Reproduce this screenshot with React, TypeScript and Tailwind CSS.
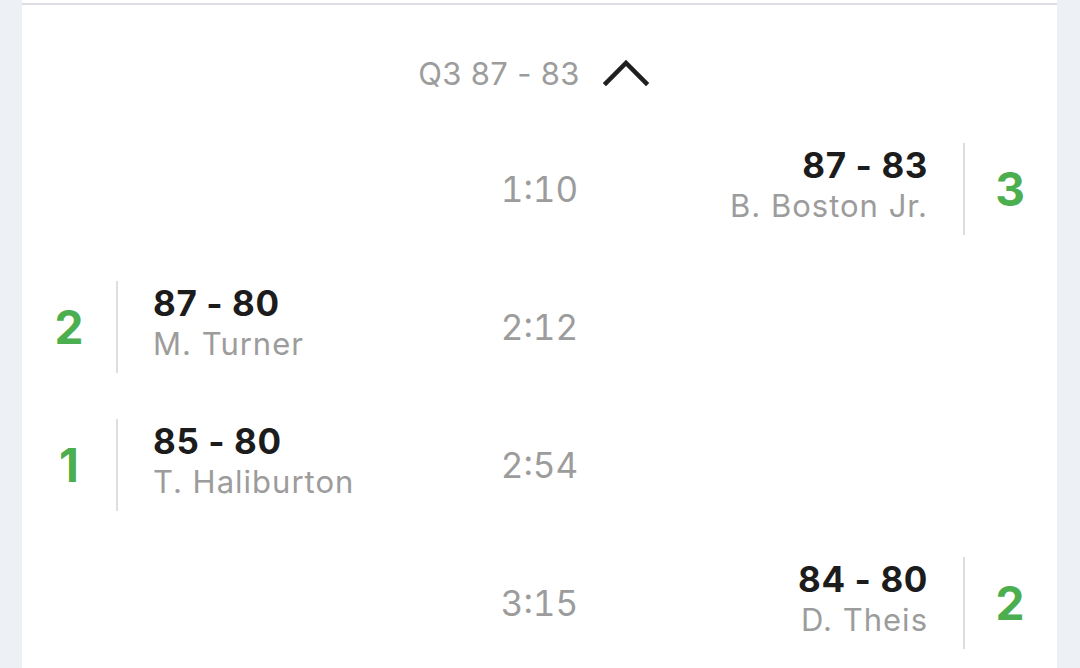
type Play = {
  time: string;
  side: 'home' | 'away';
  score: string;
  player: string;
  points: number;
};

const plays: Play[] = [
  { time: '1:10', side: 'away', score: '87 - 83', player: 'B. Boston Jr.', points: 3 },
  { time: '2:12', side: 'home', score: '87 - 80', player: 'M. Turner', points: 2 },
  { time: '2:54', side: 'home', score: '85 - 80', player: 'T. Haliburton', points: 1 },
  { time: '3:15', side: 'away', score: '84 - 80', player: 'D. Theis', points: 2 },
];

function ChevronUp() {
  return (
    <svg width="46" height="28" viewBox="0 0 46 28" fill="none" className="shrink-0">
      <polyline points="3,24 23,4 43,24" stroke="#1f1f1f" strokeWidth="4.5" strokeLinecap="square" />
    </svg>
  );
}

function Points({ value }: { value: number }) {
  return (
    <div className="w-[50px] text-center text-[46px] font-bold leading-none text-[#4bae4f]">{value}</div>
  );
}

function Divider() {
  return <div className="h-[92px] w-[2px] bg-[#dedede]" />;
}

function PlayText({ score, player, align }: { score: string; player: string; align: 'left' | 'right' }) {
  return (
    <div className={align === 'right' ? 'pb-[6px] text-right' : 'pb-[6px] text-left'}>
      <div className="text-[35px] font-bold leading-[40px] tracking-[0.6px] text-[#1c1c1c]">{score}</div>
      <div className="text-[31px] leading-[42px] tracking-[1px] text-[#9c9c9c]">{player}</div>
    </div>
  );
}

function PlayRow({ play }: { play: Play }) {
  return (
    <div className="grid h-[138px] grid-cols-[1fr_auto_1fr] items-center">
      <div className="flex items-center">
        {play.side === 'home' && (
          <>
            <div className="ml-[22px]">
              <Points value={play.points} />
            </div>
            <div className="ml-[22px]">
              <Divider />
            </div>
            <div className="ml-[35px]">
              <PlayText score={play.score} player={play.player} align="left" />
            </div>
          </>
        )}
      </div>
      <div className="text-[35px] leading-none text-[#9c9c9c] tabular-nums">{play.time}</div>
      <div className="flex items-center justify-end">
        {play.side === 'away' && (
          <>
            <div className="mr-[35px]">
              <PlayText score={play.score} player={play.player} align="right" />
            </div>
            <div className="mr-[20px]">
              <Divider />
            </div>
            <div className="mr-[22px]">
              <Points value={play.points} />
            </div>
          </>
        )}
      </div>
    </div>
  );
}

export default function App() {
  return (
    <div
      className="h-[668px] overflow-hidden bg-[#edf0f4] pl-[22px] pr-[23px]"
      style={{ fontFamily: 'Inter, "Noto Sans", sans-serif' }}
    >
      <div className="h-[3px] bg-white" />
      <div className="h-[2px] bg-[#dcdee1]" />
      <div className="bg-white">
        <div className="flex h-[115px] items-center justify-center gap-[23px] pt-[21px] pr-[12px]">
          <span className="text-[31px] leading-none tracking-[0.3px] text-[#9c9c9c]">Q3 87 - 83</span>
          <ChevronUp />
        </div>
        {plays.map((p) => (
          <PlayRow key={p.time} play={p} />
        ))}
      </div>
    </div>
  );
}
